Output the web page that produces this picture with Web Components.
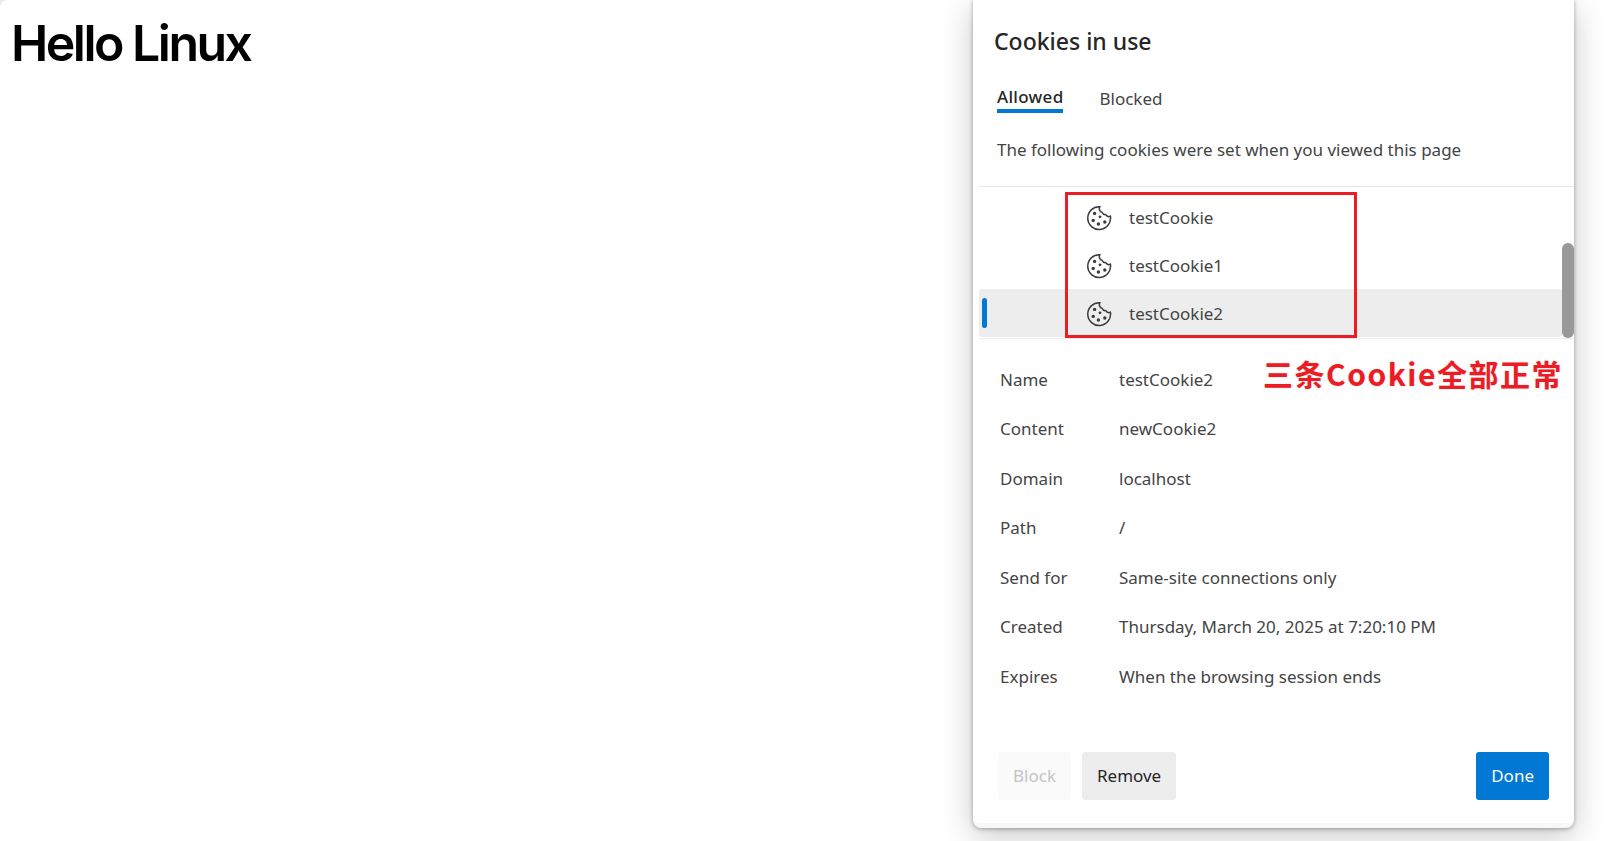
<!DOCTYPE html>
<html lang="en">
<head>
<meta charset="utf-8">
<title>Cookies in use</title>
<style>
  html, body { margin: 0; height: 100%; background: #ececec; overflow: hidden; }
  body { font-family: "Noto Sans", sans-serif; }
</style>
</head>
<body>
<demo-page>
  <hello-title slot="main">Hello Linux</hello-title>
  <cookies-dialog slot="side">
    <cookie-row slot="rows" name="testCookie"></cookie-row>
    <cookie-row slot="rows" name="testCookie1"></cookie-row>
    <cookie-row slot="rows" name="testCookie2" selected></cookie-row>
    <detail-row slot="details" label="Name">testCookie2</detail-row>
    <detail-row slot="details" label="Content">newCookie2</detail-row>
    <detail-row slot="details" label="Domain">localhost</detail-row>
    <detail-row slot="details" label="Path">/</detail-row>
    <detail-row slot="details" label="Send for">Same-site connections only</detail-row>
    <detail-row slot="details" label="Created">Thursday, March 20, 2025 at 7:20:10 PM</detail-row>
    <detail-row slot="details" label="Expires">When the browsing session ends</detail-row>
    <dialog-button slot="actions" kind="disabled">Block</dialog-button>
    <dialog-button slot="actions">Remove</dialog-button>
    <dialog-button slot="done" kind="primary">Done</dialog-button>
  </cookies-dialog>
</demo-page>

<script>
class DemoPage extends HTMLElement {
  constructor() {
    super();
    this.attachShadow({ mode: 'open' });
    this.shadowRoot.innerHTML = `
      <style>
        :host {
          display: flex;
          height: 841px;
          align-items: flex-start;
          background: #fff;
          border-top-left-radius: 8px;
          overflow: hidden;
        }
        .main { flex: 1; min-width: 0; }
        .side { flex: none; width: 601px; margin-right: 49px; }
      </style>
      <div class="main"><slot name="main"></slot></div>
      <div class="side"><slot name="side"></slot></div>`;
  }
}

class HelloTitle extends HTMLElement {
  constructor() {
    super();
    this.attachShadow({ mode: 'open' });
    this.shadowRoot.innerHTML = `
      <style>
        :host {
          display: block;
          padding: 13px 0 0 11px;
          font: 600 50px/60px Inter, sans-serif;
          letter-spacing: -2.5px;
          color: #000;
        }
      </style>
      <slot></slot>`;
  }
}

class CookiesDialog extends HTMLElement {
  constructor() {
    super();
    this.attachShadow({ mode: 'open' });
    this.shadowRoot.innerHTML = `
      <style>
        :host {
          display: block;
          position: relative;
          height: 828px;
          box-sizing: border-box;
          background: #fff;
          border-radius: 0 0 8px 8px;
          box-shadow: 0 1px 4px rgba(0,0,0,.32), 0 8px 32px rgba(0,0,0,.22);
          border-bottom: 5px solid #f8f8f6;
          color: #444;
          font-size: 17px;
          line-height: 24px;
        }
        h2 {
          margin: 0;
          padding: 25px 0 0 21px;
          font-size: 23px;
          line-height: 32px;
          font-weight: 500;
          color: #262626;
        }
        .tabs { display: flex; gap: 36px; padding: 27px 0 0 24px; }
        .tab { border-bottom: 4px solid transparent; line-height: 25px; }
        .tab.on { font-weight: 500; letter-spacing: .3px; color: #262626; border-bottom-color: #0078d4; }
        .tab.off { position: relative; top: 2px; }
        .intro { margin: 0; padding: 25px 0 0 24px; height: 39px; }
        .list {
          position: relative;
          margin: 9px 0 0 6px;
          padding-top: 6px;
          border-top: 1px solid #e6e6e6;
          border-bottom: 1px solid #eee;
          height: 145px;
        }
        .thumb {
          position: absolute;
          right: 0;
          top: 56px;
          width: 12px;
          height: 95px;
          border-radius: 6px;
          background: #999;
        }
        .redbox {
          position: absolute;
          left: 86px;
          top: 5px;
          width: 286px;
          height: 140px;
          border: 3px solid #ed1c24;
          pointer-events: none;
        }
        .note {
          position: absolute;
          left: 290px;
          top: 352px;
          white-space: nowrap;
          font: 700 30px/42px "Noto Sans CJK SC", sans-serif;
          color: #ed1c24;
          letter-spacing: 1.5px;
          text-shadow: 0 0 2px #ddd;
        }
        .details { padding: 16px 0 0 27px; }
        .footer {
          position: absolute;
          left: 25px;
          right: 25px;
          bottom: 23px;
          display: flex;
          justify-content: space-between;
        }
        .actions { display: flex; gap: 11px; }
      </style>
      <h2>Cookies in use</h2>
      <div class="tabs"><span class="tab on">Allowed</span><span class="tab off">Blocked</span></div>
      <p class="intro">The following cookies were set when you viewed this page</p>
      <div class="list">
        <slot name="rows"></slot>
        <div class="thumb"></div>
        <div class="redbox"></div>
      </div>
      <div class="note">三条Cookie全部正常</div>
      <div class="details"><slot name="details"></slot></div>
      <div class="footer">
        <div class="actions"><slot name="actions"></slot></div>
        <slot name="done"></slot>
      </div>`;
  }
}

class CookieRow extends HTMLElement {
  constructor() {
    super();
    this.attachShadow({ mode: 'open' });
    this.shadowRoot.innerHTML = `
      <style>
        :host {
          display: flex;
          align-items: center;
          height: 48px;
          margin-right: 12px;
          padding-left: 107px;
          position: relative;
          border-radius: 3px;
          box-sizing: border-box;
          padding-top: 1px;
        }
        :host([selected]) { background: #ededed; }
        :host([selected])::before {
          content: '';
          position: absolute;
          left: 3px;
          top: 9px;
          width: 5px;
          height: 30px;
          border-radius: 3px;
          background: #0078d4;
        }
        svg { width: 26px; height: 26px; flex: none; margin-right: 17px; }
      </style>
      <svg viewBox="0 0 26 26" fill="none" stroke="#3b3b3b" stroke-width="1.5">
        <path d="M13.8 1.7 A11.4 11.4 0 1 0 24.4 11.2 A3.6 3.6 0 0 1 19.8 9.6 A3.4 3.4 0 0 1 16.2 7.4 A4 4 0 0 1 13.8 1.7 Z"/>
        <g fill="#3b3b3b" stroke="none">
          <circle cx="8.6" cy="8.4" r="1.7"/>
          <circle cx="14" cy="11.8" r="1.4"/>
          <circle cx="7.2" cy="15.4" r="1.7"/>
          <circle cx="12.4" cy="19" r="1.7"/>
          <circle cx="18.8" cy="17" r="1.7"/>
        </g>
      </svg>
      <span></span>`;
    this.shadowRoot.querySelector('span').textContent = this.getAttribute('name');
  }
}

class DetailRow extends HTMLElement {
  constructor() {
    super();
    this.attachShadow({ mode: 'open' });
    this.shadowRoot.innerHTML = `
      <style>
        :host { display: flex; align-items: center; height: 49.5px; }
        .label { width: 119px; flex: none; }
      </style>
      <span class="label"></span><span><slot></slot></span>`;
    this.shadowRoot.querySelector('.label').textContent = this.getAttribute('label');
  }
}

class DialogButton extends HTMLElement {
  constructor() {
    super();
    this.attachShadow({ mode: 'open' });
    this.shadowRoot.innerHTML = `
      <style>
        :host {
          display: flex;
          align-items: center;
          justify-content: center;
          height: 48px;
          padding: 0 15px;
          border-radius: 3px;
          background: #ededed;
          color: #262626;
          font-size: 17px;
        }
        :host([kind="disabled"]) { background: #fafafa; color: #c4c4c4; }
        :host([kind="primary"]) { background: #0078d4; color: #fff; }
      </style>
      <slot></slot>`;
  }
}

customElements.define('demo-page', DemoPage);
customElements.define('hello-title', HelloTitle);
customElements.define('cookies-dialog', CookiesDialog);
customElements.define('cookie-row', CookieRow);
customElements.define('detail-row', DetailRow);
customElements.define('dialog-button', DialogButton);
</script>
</body>
</html>
